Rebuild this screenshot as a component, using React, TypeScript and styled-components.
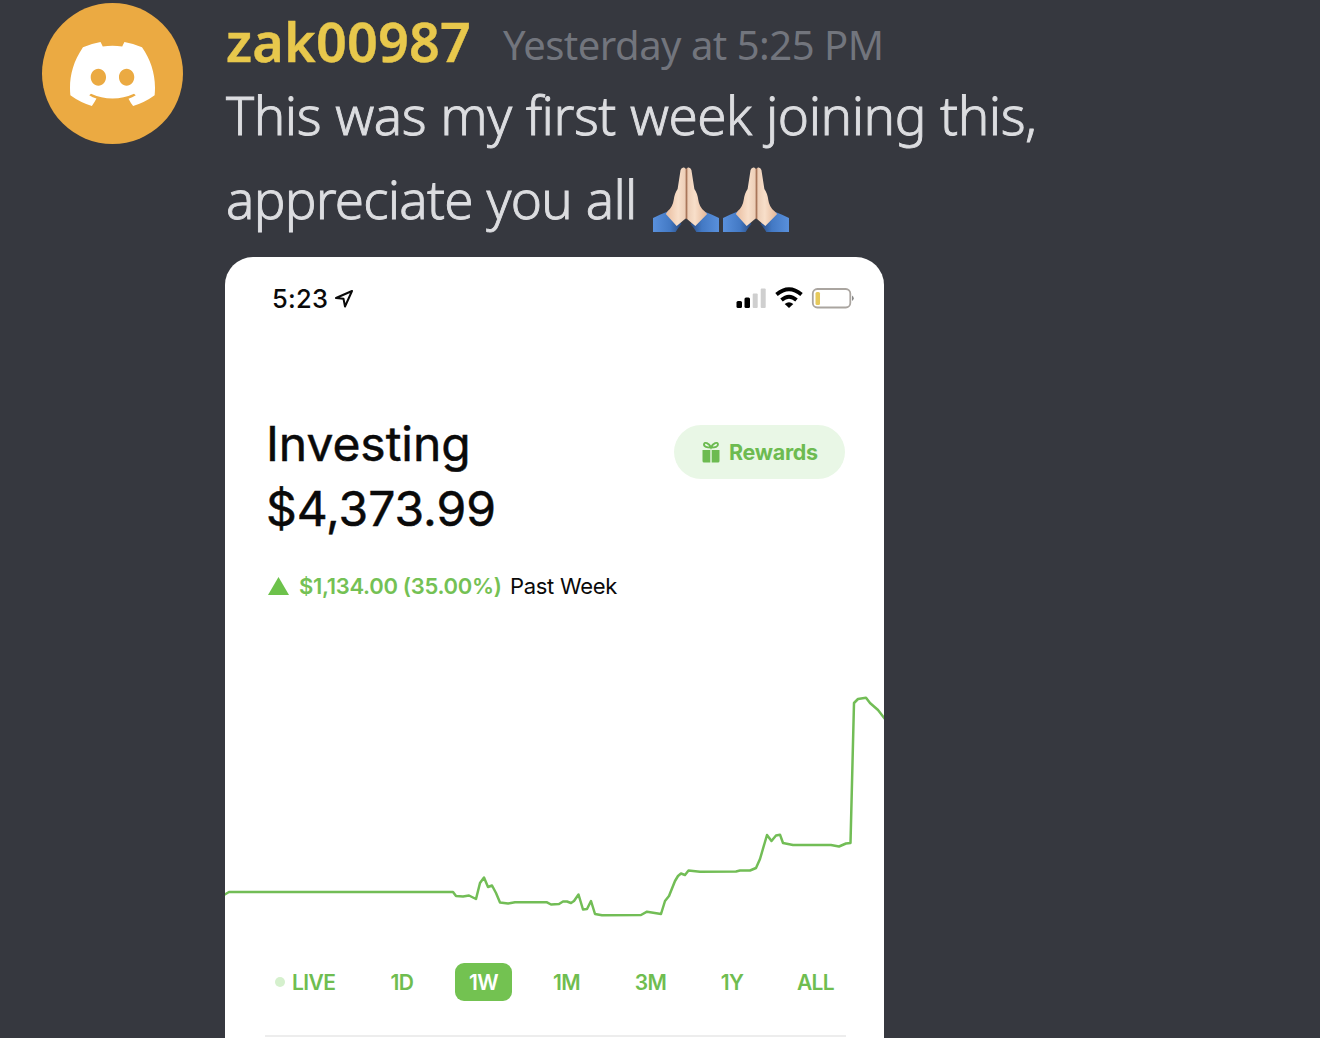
import React from 'react';
import styled, { createGlobalStyle } from 'styled-components';

const GlobalStyle = createGlobalStyle`
    * {
        box-sizing: border-box;
    }

    body {
        margin: 0;
        overflow: hidden;
        background: #36383f;
    }
`;

const Message = styled.div`
    display: flex;
    width: 1320px;
    height: 1038px;
    padding-left: 42px;
    overflow: hidden;
    background: #36383f;
    font-family: 'Noto Sans', 'Open Sans', sans-serif;
`;

const Avatar = styled.div`
    display: flex;
    align-items: center;
    justify-content: center;
    flex-shrink: 0;
    width: 141px;
    height: 141px;
    margin: 3px 42px 0 0;
    padding-top: 1px;
    border-radius: 50%;
    background: #ebaa42;
`;

const Content = styled.div`
    width: 900px;
`;

const MessageHeader = styled.div`
    display: flex;
    align-items: flex-start;
    height: 73px;
    white-space: nowrap;
`;

const Username = styled.span`
    width: 278px;
    padding-left: 1px;
    color: #e8c84c;
    font-size: 54px;
    font-weight: 600;
    line-height: 82px;
    letter-spacing: 0.15px;
    -webkit-text-stroke: 0.4px #e8c84c;
`;

const Timestamp = styled.span`
    color: #72757d;
    font-size: 40px;
    line-height: 89px;
    letter-spacing: -0.5px;
`;

const MessageText = styled.div<{ $spacing: number; $wordSpacing: number }>`
    display: flex;
    align-items: flex-start;
    height: 84px;
    padding-left: 1px;
    color: #dcdde0;
    font-size: 53px;
    font-weight: 300;
    line-height: 84px;
    letter-spacing: ${({ $spacing }) => $spacing}px;
    word-spacing: ${({ $wordSpacing }) => $wordSpacing}px;
    white-space: nowrap;
    -webkit-text-stroke: 0.9px #dcdde0;
`;

const Words = styled.span`
    width: 427px;
`;

const Emojis = styled.span`
    display: flex;
    gap: 4px;
    padding-top: 10px;
`;

const Card = styled.div`
    width: 659px;
    height: 800px;
    margin-top: 16px;
    border-radius: 28px 28px 0 0;
    overflow: hidden;
    background: #fff;
    color: #0a0a0a;
    font-family: Inter, 'Liberation Sans', sans-serif;
`;

const StatusBar = styled.div`
    display: flex;
    justify-content: space-between;
    align-items: center;
    height: 84px;
    padding: 0 29px 0 47px;
`;

const Clock = styled.div`
    display: flex;
    align-items: center;
    gap: 6px;
    font-size: 25.5px;
    font-weight: 550;
    line-height: 30px;
    letter-spacing: 0.3px;
`;

const Summary = styled.div`
    display: flex;
    justify-content: space-between;
    height: 202px;
    padding: 70px 39px 0 41px;
`;

const Heading = styled.div`
    font-size: 48px;
    font-weight: 400;
    line-height: 65px;
    letter-spacing: -0.05px;
    -webkit-text-stroke: 0.5px #0a0a0a;
`;

const Rewards = styled.div`
    display: flex;
    align-items: center;
    gap: 9px;
    width: 171px;
    height: 54px;
    margin-top: 14px;
    padding-left: 28px;
    border-radius: 27px;
    background: #e9f7e6;
    color: #6dbb51;
    font-size: 21.5px;
    font-weight: 650;
    letter-spacing: -0.3px;
`;

const Change = styled.div`
    display: flex;
    align-items: center;
    height: 30px;
    margin-top: 28px;
    padding-left: 43px;
    font-size: 22px;
    letter-spacing: -0.3px;
    white-space: nowrap;
`;

const Gain = styled.span`
    width: 221px;
    padding-left: 10px;
    color: #74c154;
    font-weight: 600;
`;

const Chart = styled.svg`
    display: block;
    width: 659px;
    height: 240px;
    margin-top: 89px;
`;

const Ranges = styled.div`
    display: grid;
    grid-template-columns: 86px 82px 81px 85px 83px 80px 87px;
    align-items: center;
    height: 38px;
    margin-top: 33px;
    padding-left: 50px;
`;

const Range = styled.div<{ $active?: boolean }>`
    justify-self: center;
    width: ${({ $active }) => ($active ? '57px' : 'auto')};
    height: 38px;
    border-radius: 9px;
    background: ${({ $active }) => ($active ? '#73c251' : 'transparent')};
    color: ${({ $active }) => ($active ? '#fff' : '#6fbd50')};
    font-size: 21px;
    font-weight: 600;
    line-height: 40px;
    text-align: center;
    letter-spacing: -0.6px;
`;

const LiveRange = styled(Range)`
    display: flex;
    gap: 7px;
    justify-self: start;
`;

const LiveDot = styled.span`
    width: 10px;
    height: 10px;
    margin-top: 14px;
    border-radius: 50%;
    background: #d5f0cd;
`;

const Divider = styled.div`
    height: 2px;
    margin: 34px 38px 0 40px;
    background: #ededed;
`;

const ranges = ['1D', '1W', '1M', '3M', '1Y', 'ALL'];

// x, y pairs of the portfolio value over the past week
const points = [
    [-1, 205], [4, 202], [228, 202], [231, 206], [238, 206.5], [244, 205.5], [251, 209], [255, 193], [259, 187.5],
    [263, 197], [267, 195.5], [271, 203], [275, 212.5], [283, 213.5], [290, 212.3], [322, 212.3], [326, 214.5],
    [334, 214], [338, 211.5], [342, 211.5], [346, 213], [349, 211], [353.5, 204.5], [358, 219.5], [362, 219],
    [366, 211], [370, 224], [377, 225.3], [416, 225], [422, 221.7], [436, 224], [440, 211], [444, 206], [450, 191],
    [453, 186], [456, 183.5], [460, 185], [463.5, 180.5], [475, 181.7], [511, 181.5], [515, 180.5], [525, 180.5],
    [531, 178], [535, 169], [542, 145], [546.5, 151], [551, 145.5], [555, 144.7], [558, 153], [568, 155], [606, 155],
    [614, 156.5], [621, 153.5], [625.5, 153], [629, 13], [633, 9], [641, 7.7], [645, 13], [653, 20], [660, 29],
];

const DiscordLogo: React.FC = () => (
    <svg width="85" height="64" viewBox="0 0 127.14 96.36" preserveAspectRatio="none">
        <path
            fill="#fff"
            d="M107.7,8.07A105.15,105.15,0,0,0,81.47,0a72.06,72.06,0,0,0-3.36,6.83A97.68,97.68,0,0,0,49,6.83,72.37,72.37,0,0,0,45.64,0,105.89,105.89,0,0,0,19.39,8.09C2.79,32.65-1.71,56.6.54,80.21h0A105.73,105.73,0,0,0,32.71,96.36,77.7,77.7,0,0,0,39.6,85.25a68.42,68.42,0,0,1-10.85-5.18c.91-.66,1.8-1.34,2.66-2a75.57,75.57,0,0,0,64.32,0c.87.71,1.76,1.39,2.66,2a68.68,68.68,0,0,1-10.87,5.19,77,77,0,0,0,6.89,11.1A105.25,105.25,0,0,0,126.6,80.22h0C129.24,52.84,122.09,29.11,107.7,8.07ZM42.45,65.69C36.18,65.69,31,60,31,53s5-12.74,11.43-12.74S54,46,53.89,53,48.84,65.69,42.45,65.69Zm42.24,0C78.41,65.69,73.25,60,73.25,53s5-12.74,11.44-12.74S96.23,46,96.12,53,91.08,65.69,84.69,65.69Z"
        />
    </svg>
);

const PrayingHands: React.FC = () => (
    <svg width="66" height="66" viewBox="0 0 67 66" preserveAspectRatio="none">
        <defs>
            <linearGradient id="skin" x1="0" x2="1" y1="0" y2="0">
                <stop offset="0" stopColor="#e9bd9f" />
                <stop offset="0.3" stopColor="#f8dfca" />
                <stop offset="0.46" stopColor="#edcfb8" />
                <stop offset="0.5" stopColor="#a9765a" />
                <stop offset="0.54" stopColor="#edcfb8" />
                <stop offset="0.7" stopColor="#f8dfca" />
                <stop offset="1" stopColor="#e4b697" />
            </linearGradient>
            <linearGradient id="sleeve" x1="0" x2="1" y1="0" y2="0">
                <stop offset="0" stopColor="#5990dc" />
                <stop offset="0.6" stopColor="#4379c4" />
                <stop offset="1" stopColor="#284a80" />
            </linearGradient>
            <linearGradient id="sleeveRight" x1="1" x2="0" y1="0" y2="0">
                <stop offset="0" stopColor="#5990dc" />
                <stop offset="0.6" stopColor="#4379c4" />
                <stop offset="1" stopColor="#284a80" />
            </linearGradient>
        </defs>
        <path fill="url(#sleeve)" d="M0 51Q6 48 16 44L29 57Q26 60 23 65H0Z" />
        <path fill="url(#sleeveRight)" d="M67 51Q61 48 51 44L38 57Q41 60 44 65H67Z" />
        <path
            fill="url(#skin)"
            d="M28 3Q29 0 31.500 .5Q33 1 33.500 2Q34 1 35.500 .5Q38 0 39 3L42 22Q45 26 46 33Q47 40 52 44L55 47L43 59Q38 55 34.500 52Q33.500 51 32.500 52Q29 55 24 59L13 47L15 44Q20 40 21 33Q22 26 25 22Z"
        />
    </svg>
);

const LocationArrow: React.FC = () => (
    <svg width="20" height="20" viewBox="0 0 20 20">
        <path d="M18 2L2 9L9.500 9.800L11 17.500Z" fill="none" stroke="#0a0a0a" strokeWidth="2" strokeLinejoin="round" />
    </svg>
);

const StatusIcons: React.FC = () => (
    <svg width="119" height="24" viewBox="0 0 119 24">
        <rect x="0.500" y="14" width="5.500" height="7" rx="1.500" fill="#000" />
        <rect x="8.500" y="10.500" width="5.500" height="10.500" rx="1.500" fill="#000" />
        <rect x="16.700" y="6.500" width="5" height="14.500" rx="1" fill="#cfcfcf" />
        <rect x="24.700" y="1.500" width="5" height="19.500" rx="1" fill="#cfcfcf" />
        <path d="M40.500 7.500Q53 -3 65.500 7.500" fill="none" stroke="#000" strokeWidth="3.800" />
        <path d="M45.500 13Q53 6.500 60.500 13" fill="none" stroke="#000" strokeWidth="3.800" />
        <path d="M48.700 17Q53 13.500 57.300 17L53 21Z" fill="#000" />
        <rect x="76.800" y="2" width="37.500" height="18.500" rx="4.500" fill="none" stroke="#aaa5a0" strokeWidth="1.800" />
        <rect x="79.500" y="5" width="4.500" height="13" rx="1.500" fill="#e6c95c" />
        <path d="M116 8.500Q119.500 11.200 116 14Z" fill="#888" />
    </svg>
);

const Gift: React.FC = () => (
    <svg width="18" height="22" viewBox="0 0 18 22">
        <path fill="#6dbb51" d="M.5 9H8.300V21.500H2Q.5 21.500 .5 20ZM9.700 9H17.500V20Q17.500 21.500 16 21.500H9.700Z" />
        <path
            d="M9 6.500C7 2 2.500 .5 2 3.200C1.700 5.700 5 6.500 9 6.500C13 6.500 16.300 5.700 16 3.200C15.500 .5 11 2 9 6.500Z"
            fill="none"
            stroke="#6dbb51"
            strokeWidth="1.900"
        />
    </svg>
);

const App: React.FC = () => {
    return (
        <>
            <GlobalStyle />
            <Message>
                <Avatar>
                    <DiscordLogo />
                </Avatar>
                <Content>
                    <MessageHeader>
                        <Username>zak00987</Username>
                        <Timestamp>Yesterday at 5:25 PM</Timestamp>
                    </MessageHeader>
                    <MessageText $spacing={-0.46} $wordSpacing={0.8}>
                        This was my first week joining this,
                    </MessageText>
                    <MessageText $spacing={-0.75} $wordSpacing={0.8}>
                        <Words>appreciate you all</Words>
                        <Emojis>
                            <PrayingHands />
                            <PrayingHands />
                        </Emojis>
                    </MessageText>
                    <Card>
                        <StatusBar>
                            <Clock>
                                <span>5:23</span>
                                <LocationArrow />
                            </Clock>
                            <StatusIcons />
                        </StatusBar>
                        <Summary>
                            <div>
                                <Heading>Investing</Heading>
                                <Heading>$4,373.99</Heading>
                            </div>
                            <Rewards>
                                <Gift />
                                <span>Rewards</span>
                            </Rewards>
                        </Summary>
                        <Change>
                            <svg width="21" height="18" viewBox="0 0 21 18">
                                <path d="M10.500 0L21 18H0Z" fill="#6dc24b" />
                            </svg>
                            <Gain>$1,134.00 (35.00%)</Gain>
                            <span>Past Week</span>
                        </Change>
                        <Chart viewBox="0 0 659 240">
                            <polyline
                                points={points.map((p) => p.join(',')).join(' ')}
                                fill="none"
                                stroke="#72bd56"
                                strokeWidth="2.500"
                                strokeLinejoin="round"
                            />
                        </Chart>
                        <Ranges>
                            <LiveRange>
                                <LiveDot />
                                LIVE
                            </LiveRange>
                            {ranges.map((range) => (
                                <Range key={range} $active={range === '1W'}>
                                    {range}
                                </Range>
                            ))}
                        </Ranges>
                        <Divider />
                    </Card>
                </Content>
            </Message>
        </>
    );
};

export default App;
